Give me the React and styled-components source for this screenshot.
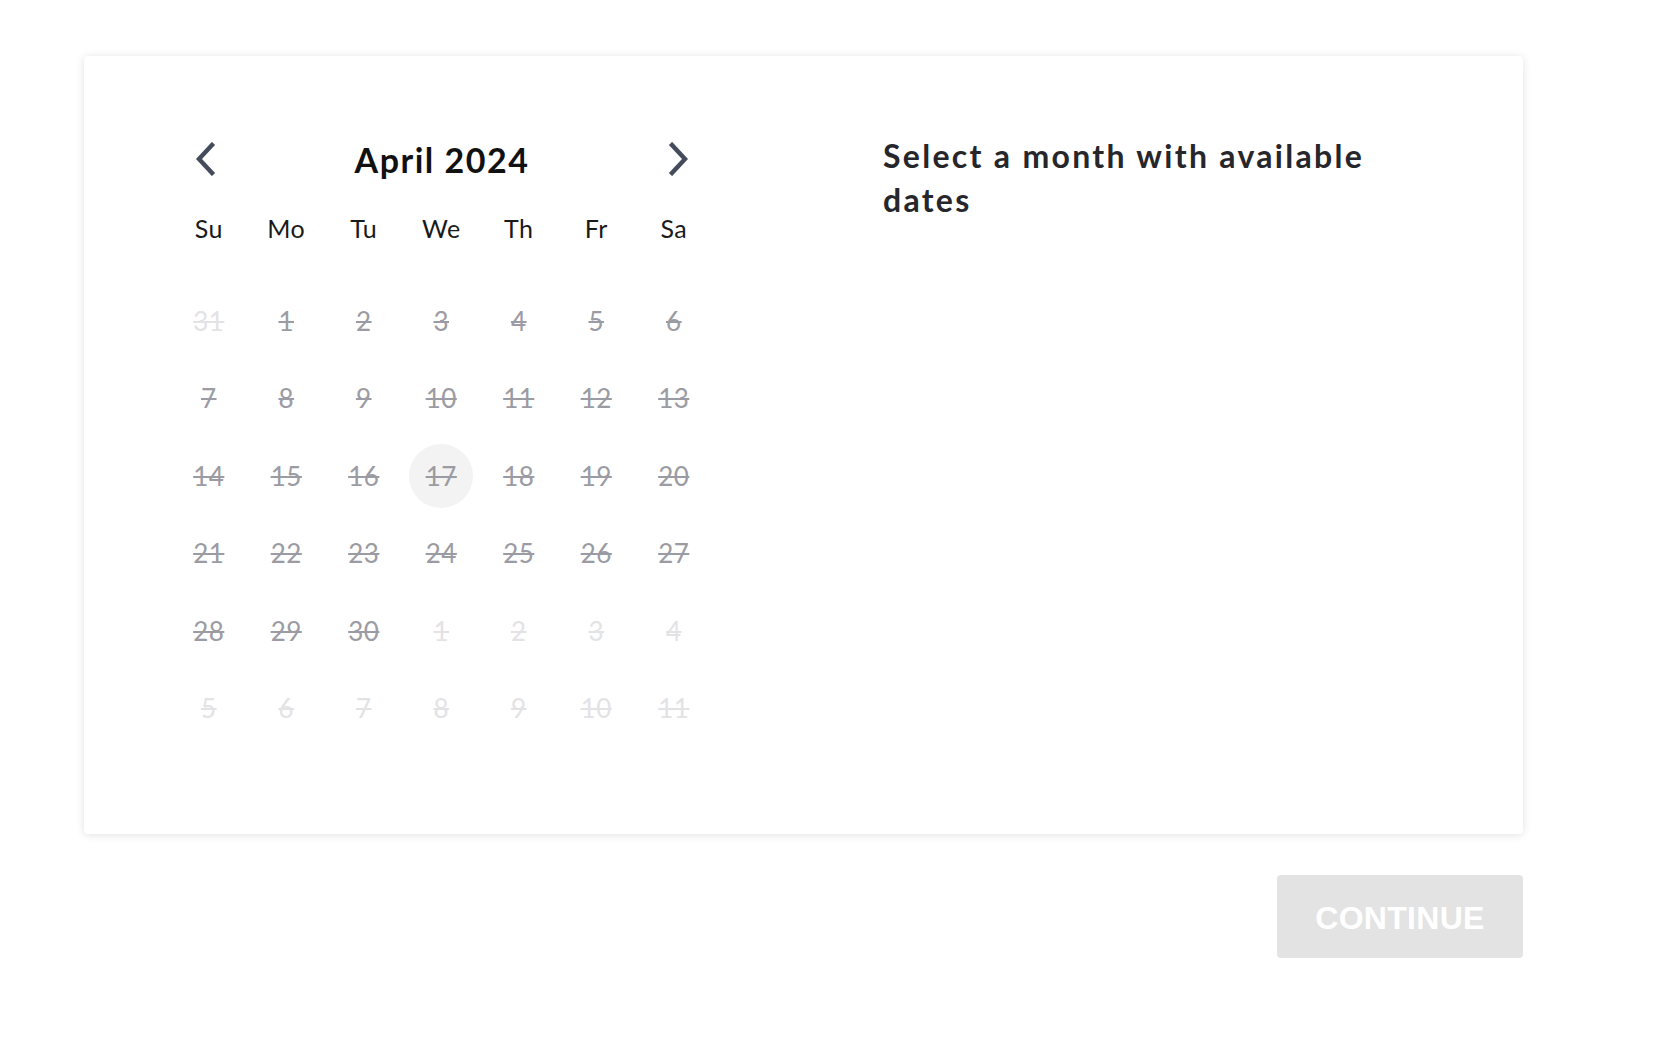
import React from "react";
import styled, { createGlobalStyle } from "styled-components";

const GlobalStyle = createGlobalStyle`
  html, body {
    margin: 0;
    padding: 0;
    background: #ffffff;
  }
  body {
    font-family: Lato, "Open Sans", "Liberation Sans", sans-serif;
    -webkit-font-smoothing: antialiased;
  }
`;

const Page = styled.div`
  width: 1654px;
  height: 1044px;
  padding: 56px 0 0 84px;
  box-sizing: border-box;
  overflow: hidden;
`;

const Wrap = styled.div`
  width: 1439px;
  display: flex;
  flex-direction: column;
  align-items: flex-end;
`;

const Card = styled.div`
  width: 100%;
  height: 778px;
  box-sizing: border-box;
  background: #fff;
  border-radius: 4px;
  box-shadow: 0 1px 8px rgba(0, 0, 0, 0.12);
  display: flex;
  padding: 71px 0 0 86px;
`;

const Calendar = styled.div`
  width: 542px;
  display: flex;
  flex-direction: column;
`;

const Header = styled.div`
  height: 64px;
  display: flex;
  align-items: center;
  justify-content: space-between;
  padding: 0 20px 0 22px;
`;

const NavButton = styled.button`
  border: 0;
  background: none;
  padding: 0;
  width: 26px;
  height: 36px;
  display: flex;
  align-items: center;
  justify-content: center;
  cursor: pointer;
  color: #444b5b;
`;

const Month = styled.h2`
  margin: 0;
  font-size: 34px;
  font-weight: 700;
  color: #111;
  letter-spacing: 1.5px;
`;

const Grid = styled.div`
  display: grid;
  grid-template-columns: repeat(7, 77.5px);
  grid-auto-rows: ${({ $row }) => $row}px;
  margin-top: ${({ $top }) => $top}px;
`;

const Weekday = styled.div`
  display: flex;
  align-items: center;
  justify-content: center;
  font-size: 25px;
  color: #1a1a1a;
  letter-spacing: 0.4px;
`;

const Day = styled.div`
  display: flex;
  align-items: center;
  justify-content: center;
`;

const DayNum = styled.span`
  width: 64px;
  height: 64px;
  border-radius: 50%;
  display: flex;
  align-items: center;
  justify-content: center;
  font-size: 26px;
  letter-spacing: 0.5px;
  color: ${({ $outside }) => ($outside ? "#e3e3e5" : "#9b9ba3")};
  background: ${({ $today }) => ($today ? "#f3f3f3" : "transparent")};
  text-decoration: line-through;
  text-decoration-thickness: 2px;
`;

const Side = styled.div`
  margin-left: 171px;
  padding-top: 7px;
  width: 500px;
`;

const SideTitle = styled.h3`
  margin: 0;
  font-size: 32px;
  line-height: 44px;
  font-weight: 700;
  letter-spacing: 2.3px;
  color: #26262b;
`;

const Continue = styled.button`
  margin-top: 41px;
  width: 246px;
  height: 83px;
  padding: 4px 0 0;
  border: 0;
  border-radius: 4px;
  background: #e3e3e3;
  color: #fff;
  font-family: "Liberation Sans", Arial, sans-serif;
  font-weight: 700;
  font-size: 32px;
  letter-spacing: 0.3px;
`;

const Chevron = ({ dir }) => (
  <svg width="22" height="34" viewBox="0 0 22 34" fill="none">
    <polyline
      points={dir === "left" ? "18,3 5,17 18,31" : "4,3 17,17 4,31"}
      stroke="currentColor"
      strokeWidth="4.4"
      strokeLinecap="square"
    />
  </svg>
);

const weekdays = ["Su", "Mo", "Tu", "We", "Th", "Fr", "Sa"];

const days = [
  { n: 31, out: true },
  ...Array.from({ length: 30 }, (_, i) => ({ n: i + 1 })),
  ...Array.from({ length: 11 }, (_, i) => ({ n: i + 1, out: true })),
];

export default function App() {
  return (
    <Page>
      <GlobalStyle />
      <Wrap>
        <Card>
          <Calendar>
            <Header>
              <NavButton aria-label="Previous month">
                <Chevron dir="left" />
              </NavButton>
              <Month>April 2024</Month>
              <NavButton aria-label="Next month">
                <Chevron dir="right" />
              </NavButton>
            </Header>
            <Grid $row={44} $top={15}>
              {weekdays.map((d) => (
                <Weekday key={d}>{d}</Weekday>
              ))}
            </Grid>
            <Grid $row={77.5} $top={32}>
              {days.map((d, i) => (
                <Day key={i}>
                  <DayNum $outside={d.out} $today={!d.out && d.n === 17}>
                    {d.n}
                  </DayNum>
                </Day>
              ))}
            </Grid>
          </Calendar>
          <Side>
            <SideTitle>Select a month with available dates</SideTitle>
          </Side>
        </Card>
        <Continue disabled>CONTINUE</Continue>
      </Wrap>
    </Page>
  );
}
